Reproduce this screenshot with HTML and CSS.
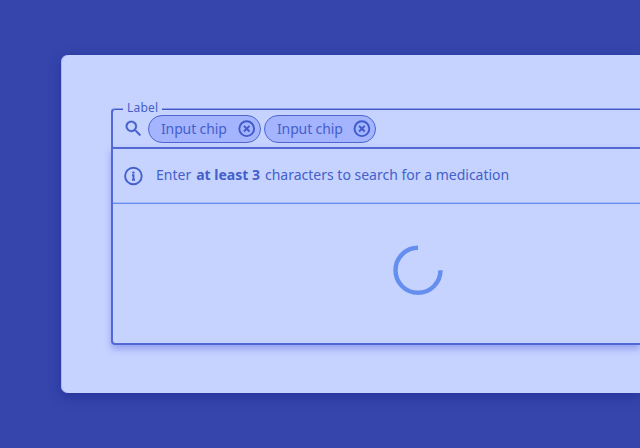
FILE: index.html
```html
<!DOCTYPE html>
<html lang="en">
<head>
<meta charset="utf-8">
<title>Medication search</title>
<link rel="stylesheet" href="styles.css">
</head>
<body>
<main class="card">
  <div class="search">
    <div class="field">
      <span class="label">Label</span>
      <svg class="search-icon" viewBox="0 0 24 24"><path d="M15.5 14h-.79l-.28-.27A6.471 6.471 0 0 0 16 9.5 6.5 6.5 0 1 0 9.5 16c1.61 0 3.09-.59 4.23-1.57l.27.28v.79l5 4.99L20.49 19l-4.99-5zm-6 0C7.01 14 5 11.99 5 9.5S7.01 5 9.5 5 14 7.01 14 9.5 11.99 14 9.5 14z"/></svg>
      <div class="chips">
        <div class="chip"><span>Input chip</span><svg class="close" viewBox="0 0 18 18"><circle cx="8.7" cy="8.7" r="7.4"/><path d="M5.9 5.9l5.6 5.6M11.5 5.9l-5.6 5.6"/></svg></div>
        <div class="chip"><span>Input chip</span><svg class="close" viewBox="0 0 18 18"><circle cx="8.9" cy="8.7" r="7.4"/><path d="M6.1 5.9l5.6 5.6M11.7 5.9l-5.6 5.6"/></svg></div>
      </div>
    </div>
    <div class="panel">
      <div class="hint">
        <svg class="info" viewBox="0 0 20 20"><circle cx="9.4" cy="10" r="8.3"/><circle class="dot" cx="9.4" cy="6.6" r="1.2"/><path d="M8 9.3h1.5v4.7M8 13.7h3"/></svg>
        <p><span>Enter</span><b>at least 3</b><span>characters to search for a medication</span></p>
      </div>
      <div class="loading">
        <svg class="spinner" viewBox="0 0 50 50"><path d="M25 2.8A22.5 22.5 0 1 0 47.5 25.3"/></svg>
      </div>
    </div>
  </div>
</main>
</body>
</html>
```
FILE: styles.css
```css
* { box-sizing: border-box; }
body {
  margin: 0;
  height: 448px;
  overflow: hidden;
  padding: 55px 0 0 61px;
  background: #3545ac;
  font: 14px/20px "Noto Sans", "Open Sans", sans-serif;
  color: #4460ca;
}
svg { display: block; flex: none; }
.card {
  width: 579px;
  height: 338px;
  padding: 53px 0 0 50px;
  border-radius: 7px 0 0 7px;
  background: #c6d3ff;
  box-shadow: 0 4px 12px rgba(30, 40, 140, .55), inset 1px 0 0 #a9b5f8;
}
.search { width: 529px; }
.field {
  position: relative;
  display: flex;
  height: 41px;
  padding: 6px 0 0 10px;
  border: 2px solid #5368d2;
  border-right: 0;
  border-top: 1px solid #8b9ce6;
  box-shadow: inset 0 1px 0 #4058c6;
  border-radius: 4px 0 0 3px;
}
.label {
  position: absolute;
  left: 10px;
  top: -8px;
  padding: 0 4px;
  background: #c6d3ff;
  font-size: 12px;
  line-height: 14px;
  letter-spacing: .2px;
}
.search-icon { width: 21px; height: 21px; margin-top: 3px; fill: #4560cc; stroke: #4560cc; stroke-width: .3; }
.chips { display: flex; gap: 3px; margin-left: 4px; }
.chip {
  display: flex;
  align-items: center;
  justify-content: space-between;
  width: 112.5px;
  height: 27.5px;
  padding: 0 4px 0 12px;
  border: 1px solid #4e67cf;
  border-radius: 14px;
  background: #a5b4ff;
  letter-spacing: -.13px;
}
.chip + .chip { padding-left: 12.5px; }
.close { width: 18px; height: 18px; fill: none; stroke: #3f5bc8; stroke-width: 1.9; }
.panel {
  height: 198px;
  margin-top: -2px;
  border: 2px solid #5368d6;
  border-top: 0;
  border-right: 0;
  border-radius: 0 0 0 4px;
  box-shadow: 0 4px 7px rgba(90, 100, 220, .45);
}
.hint {
  display: flex;
  height: 57px;
  align-items: center;
  padding-left: 10px;
  box-shadow: inset 0 -1px 0 #648fef, inset 0 -2px 0 #a3b9fa;
}
.info { width: 20px; height: 20px; margin: 1px 0 0 1px; fill: none; stroke: #4560cc; stroke-width: 1.9; }
.info .dot { fill: #4560cc; stroke: none; }
.hint p { display: flex; gap: 5px; margin: 0 0 2px 12px; white-space: nowrap; }
.loading { padding: 41px 0 0 280px; }
.spinner { width: 50px; height: 50px; fill: none; stroke: #648fef; stroke-width: 4.4; }
```
